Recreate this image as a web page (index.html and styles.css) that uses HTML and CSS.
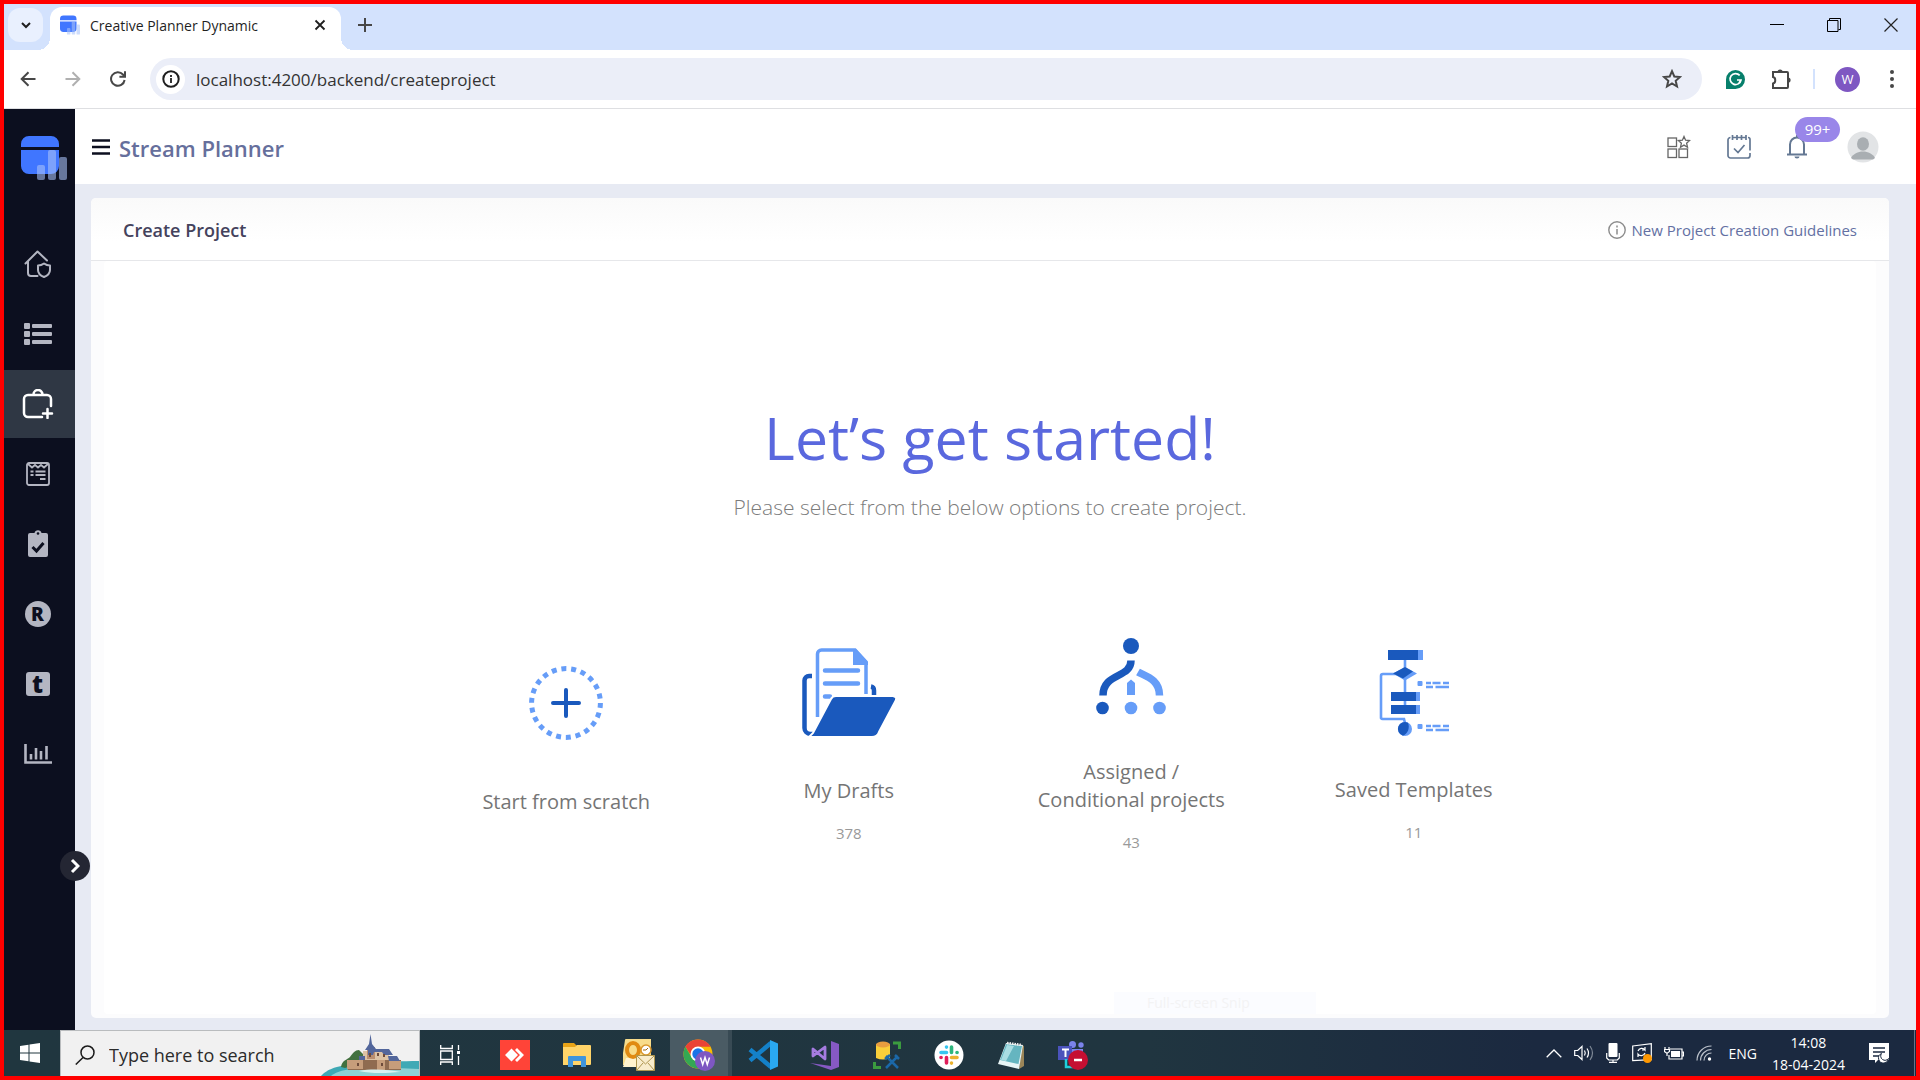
FILE: index.html
```html
<!DOCTYPE html>
<html lang="en">
<head>
<meta charset="utf-8">
<title>Creative Planner Dynamic</title>
<link rel="stylesheet" href="styles.css">
</head>
<body>
<svg class="defs" width="0" height="0" aria-hidden="true">
  <symbol id="logo" viewBox="0 0 46 44">
    <path fill="#4076ff" d="M0 11V8a8 8 0 0 1 8-8h22a8 8 0 0 1 8 8v3zM0 14h38v16a8 8 0 0 1-8 8H8a8 8 0 0 1-8-8z"/>
    <g fill="#a9c3f8" fill-opacity=".58"><rect x="16" y="29" width="8" height="15" rx="2"/><rect x="27" y="14" width="8" height="30" rx="2"/><rect x="38" y="21" width="8" height="23" rx="2"/></g>
  </symbol>
</svg>

<div class="tabstrip">
  <button class="tab-search" aria-label="Search tabs"><svg width="12" height="8" viewBox="0 0 12 8"><path d="M2 2l4 4 4-4" fill="none" stroke="#1f1f1f" stroke-width="2"/></svg></button>
  <div class="tab">
    <svg class="favicon" width="20" height="20"><use href="#logo"/></svg>
    <span class="tab-title">Creative Planner Dynamic</span>
    <button class="plain" aria-label="Close tab"><svg width="12" height="12" viewBox="0 0 12 12"><path d="M1.500 1.500l9 9M10.500 1.500l-9 9" stroke="#1f1f1f" stroke-width="1.800"/></svg></button>
  </div>
  <button class="plain new-tab" aria-label="New tab"><svg width="14" height="14" viewBox="0 0 14 14"><path d="M7 0v14M0 7h14" stroke="#474747" stroke-width="2"/></svg></button>
  <div class="window-controls">
    <button class="plain" aria-label="Minimize"><svg width="14" height="14" viewBox="0 0 14 14"><path d="M0 6.500h14" stroke="#000"/></svg></button>
    <button class="plain" aria-label="Restore"><svg width="14" height="14" viewBox="0 0 14 14"><path d="M.5 2.500h10.500v11H.5zM2.500 2V.5h11v11H11.500" fill="none" stroke="#000"/></svg></button>
    <button class="plain" aria-label="Close"><svg width="14" height="14" viewBox="0 0 14 14"><path d="M.5.5l13 13M13.500.5l-13 13" stroke="#222" stroke-width="1.200"/></svg></button>
  </div>
</div>

<div class="toolbar">
  <div class="nav-buttons">
    <button class="plain" aria-label="Back"><svg width="16" height="16" viewBox="0 0 16 16"><path d="M15.500 8H2M8.500 1.200L1.700 8l6.800 6.800" fill="none" stroke="#474747" stroke-width="2"/></svg></button>
    <button class="plain" aria-label="Forward"><svg width="16" height="16" viewBox="0 0 16 16"><path d="M.5 8H14M7.500 1.200L14.300 8l-6.800 6.800" fill="none" stroke="#b0b0b0" stroke-width="2"/></svg></button>
    <button class="plain" aria-label="Reload"><svg width="16" height="16" viewBox="0 0 16 16"><path d="M14.600 9A6.800 6.800 0 1 1 13 3.500L14.800 5.400M15 .3v5.500H9.400" fill="none" stroke="#474747" stroke-width="2"/></svg></button>
  </div>
  <div class="omnibox">
    <button class="plain site-info" aria-label="Site information"><svg width="18" height="18" viewBox="0 0 18 18"><circle cx="9" cy="9" r="7.700" fill="none" stroke="#1f1f1f" stroke-width="2"/><path d="M9 8v5M9 5v2" stroke="#1f1f1f" stroke-width="1.800"/></svg></button>
    <input class="url" type="text" aria-label="Address" value="localhost:4200/backend/createproject">
    <button class="plain" aria-label="Bookmark"><svg width="20" height="20" viewBox="0 0 20 20"><path d="M10 2.200l2.300 5.300 5.700.5-4.300 3.800 1.300 5.700-5-3-5 3 1.300-5.700L2 8l5.700-.5z" fill="none" stroke="#474747" stroke-width="2"/></svg></button>
  </div>
  <button class="plain" aria-label="Grammarly"><svg width="19" height="19" viewBox="0 0 19 19"><path fill="#077f6b" d="M9.500 0a9.500 9.500 0 1 1 0 19H0V9.500A9.500 9.500 0 0 1 9.500 0z"/><path d="M13.700 5.400A5.500 5.500 0 1 0 15 10h-4M15 10l-2 3" fill="none" stroke="#fff" stroke-width="1.700"/></svg></button>
  <button class="plain ext" aria-label="Extensions"><svg width="21" height="21" viewBox="0 0 21 21"><path d="M2 3h14a1 1 0 0 1 1 1v14a1 1 0 0 1-1 1H2v-4.500c3-.5 3-6 0-6.500z" fill="none" stroke="#474747" stroke-width="2"/><path fill="#474747" d="M6.500 3a2.600 2.600 0 0 1 5.200 0zM17 8.500a2.600 2.600 0 0 1 0 5.200z"/></svg></button>
  <span class="divider"></span>
  <button class="profile" aria-label="Profile">W</button>
  <button class="plain" aria-label="Menu"><svg width="6" height="20" viewBox="0 0 6 20"><g fill="#474747"><circle cx="3" cy="3" r="2"/><circle cx="3" cy="10" r="2"/><circle cx="3" cy="17" r="2"/></g></svg></button>
</div>

<div class="app">
  <aside class="sidebar">
    <svg class="brand" width="46" height="44"><use href="#logo"/></svg>
    <nav class="menu">
      <a href="#home" aria-label="Home"><svg width="28" height="28" viewBox="0 0 28 28"><g fill="none" stroke="#b4b6c2" stroke-width="2" stroke-linejoin="round" stroke-linecap="round"><path d="M1.500 13.500L13.500 1.500l9.500 9M4 11.500V23a3 3 0 0 0 3 3h6.500"/><path d="M20 13.500c2 1.500 4 2 6 2V20c0 3.500-3 5.800-6 7-3-1.200-6-3.500-6-7v-4.500c2 0 4-.5 6-2z"/></g></svg></a>
      <a href="#list" aria-label="List"><svg width="28" height="22" viewBox="0 0 28 22"><g fill="#b4b6c2"><rect y="0" width="6" height="6" rx="1"/><rect y="8" width="6" height="6" rx="1"/><rect y="16" width="6" height="6" rx="1"/><rect x="8" y="1" width="20" height="4" rx="1"/><rect x="8" y="9" width="20" height="4" rx="1"/><rect x="8" y="17" width="20" height="4" rx="1"/></g></svg></a>
      <a class="active" href="#create" aria-label="Create project"><svg width="32" height="30" viewBox="0 0 32 30"><g fill="none" stroke="#fff" stroke-width="2.500" stroke-linecap="round"><path d="M29 17v-7a4 4 0 0 0-4-4H6a4 4 0 0 0-4 4v14a4 4 0 0 0 4 4h14M11.500 5.500a4.500 4.500 0 0 1 9 0"/><path d="M25.500 20v9M21 24.500h9"/></g></svg></a>
      <a href="#requests" aria-label="Requests"><svg width="24" height="24" viewBox="0 0 24 24"><rect x="1" y="1" width="22" height="22" rx="2" fill="none" stroke="#b4b6c2" stroke-width="1.800"/><path d="M2 2l4 3.500L9 3l3 2.500L15 3l3 2.500L22 2M4.500 9.500h3M9.500 9.500h10M4.500 13h3M9.500 13h10M14 17h5.500" fill="none" stroke="#b4b6c2" stroke-width="1.800"/></svg></a>
      <a href="#tasks" aria-label="Tasks"><svg width="22" height="28" viewBox="0 0 22 28"><path fill="#b4b6c2" d="M3 3h4.500a3.600 3.600 0 0 1 7 0H19a2 2 0 0 1 2 2v20a2 2 0 0 1-2 2H3a2 2 0 0 1-2-2V5a2 2 0 0 1 2-2z"/><circle cx="11" cy="3.500" r="1.300" fill="#0c0f1f"/><path d="M5.500 17l4 4 7-8" fill="none" stroke="#0c0f1f" stroke-width="3"/></svg></a>
      <a href="#resources" aria-label="Resources"><span class="glyph round">R</span></a>
      <a href="#timesheet" aria-label="Timesheet"><span class="glyph square">t</span></a>
      <a href="#reports" aria-label="Reports"><svg width="28" height="20" viewBox="0 0 28 20"><path d="M1.500 0v18.500H28M7 10v5.500M12 4v11.500M17 7v8.500M22.500 2v13.500" fill="none" stroke="#b4b6c2" stroke-width="2.600"/></svg></a>
    </nav>
    <button class="expand" aria-label="Expand sidebar"><svg width="10" height="16" viewBox="0 0 10 16"><path d="M2 2l6 6-6 6" fill="none" stroke="#fff" stroke-width="3"/></svg></button>
  </aside>

  <div class="main">
    <header class="app-header">
      <button class="plain" aria-label="Toggle menu"><svg width="18" height="16" viewBox="0 0 18 16"><path d="M0 1.500h18M0 8h18M0 14.500h18" stroke="#0c0f1f" stroke-width="2.600"/></svg></button>
      <h1 class="app-name">Stream Planner</h1>
      <div class="actions">
        <button class="plain" aria-label="Apps"><svg width="24" height="24" viewBox="0 0 24 24"><g fill="none" stroke="#666" stroke-width="1.300"><rect x="1" y="3" width="8.500" height="8.500"/><rect x="1" y="14" width="8.500" height="8.500"/><rect x="12" y="14" width="8.500" height="8.500"/><path d="M17 1.500l1.600 3.700 4 .3-3 2.700.9 4-3.500-2.100-3.500 2.100.9-4-3-2.700 4-.3z"/></g></svg></button>
        <button class="plain" aria-label="Calendar"><svg width="24" height="24" viewBox="0 0 24 24"><path d="M5.500 2.500H19M21 2.500a2 2 0 0 1 2 2v11M23 18v2.500a2.500 2.500 0 0 1-2.500 2.500h-17A2.500 2.500 0 0 1 1 20.500V5a2.500 2.500 0 0 1 2.500-2.500M5.500 0v5M10 0v5M14.500 0v5M19 0v5M7 13.500l4 4L17.500 10" fill="none" stroke="#647893" stroke-width="1.700"/></svg></button>
        <button class="plain bell" aria-label="Notifications"><svg width="20" height="24" viewBox="0 0 20 24"><path d="M0 19.500h20M3 19.500V9.500a7 7 0 0 1 14 0v10M10 0v3" fill="none" stroke="#647893" stroke-width="2"/><path d="M7.500 21.500h5a2.500 2 0 0 1-5 0z" fill="#647893"/></svg><span class="badge">99+</span></button>
        <button class="plain" aria-label="Account"><svg width="32" height="32" viewBox="0 0 32 32"><circle cx="16" cy="16" r="15.500" fill="#e2e4e6"/><ellipse cx="16" cy="13" rx="6" ry="6.800" fill="#a9aeb2"/><path fill="#a9aeb2" d="M4 27c2-4 7-6.500 12-6.500S26 23 28 27l-2 1.500H6z"/></svg></button>
      </div>
    </header>

    <main class="page">
      <section class="card">
        <div class="card-head">
          <h2 class="card-title">Create Project</h2>
          <a class="guidelines" href="#guidelines"><svg width="18" height="18" viewBox="0 0 18 18"><circle cx="9" cy="9" r="8.200" fill="none" stroke="#8c8c8c" stroke-width="1.400"/><path d="M9 8v5.500M9 4.500v2" stroke="#8c8c8c" stroke-width="1.500"/></svg>New Project Creation Guidelines</a>
        </div>
        <div class="card-body">
          <h3 class="hero">Let’s get started!</h3>
          <p class="hint">Please select from the below options to create project.</p>
          <div class="options">
            <a class="option bare" href="#scratch">
              <svg width="74" height="82" viewBox="0 0 74 82"><circle cx="37" cy="37" r="34.400" fill="none" stroke="#669df8" stroke-width="5" stroke-dasharray="5 4.825"/><path d="M37 24v26M24 37h26" stroke="#1a59bd" stroke-width="4" stroke-linecap="round"/></svg>
              <span class="label">Start from scratch</span>
            </a>
            <a class="option" href="#drafts">
              <svg width="94" height="89" viewBox="0 0 94 89"><path d="M10 28H7a4.500 4.500 0 0 0-4.500 4.500V80a6 6 0 0 0 6 6H30M69 38.500q3 .5 3 4V52" fill="none" stroke="#1a59bd" stroke-width="4.500"/><path d="M15.500 69V6a4 4 0 0 1 4-4H53L64 14v32" fill="none" stroke="#669df8" stroke-width="3.500"/><path fill="#669df8" d="M51 1h3l12 13v3H51z"/><path d="M23 22.500h33M23 35.500h33M23 48.500h5" stroke="#669df8" stroke-width="4.500" stroke-linecap="round"/><path fill="#1a59bd" stroke="#fff" stroke-width="2" d="M29 51q1.500-3 5-3h57q4 1 3 4L77 84q-2 5-7 5H7l4-4z"/></svg>
              <span class="label">My Drafts</span>
              <span class="count">378</span>
            </a>
            <a class="option" href="#assigned">
              <svg width="70" height="80" viewBox="0 0 70 80"><g fill="#1a59bd"><circle cx="35" cy="8" r="8"/><circle cx="6.500" cy="70" r="6.300"/></g><g fill="#669df8"><circle cx="35" cy="70" r="6.300"/><circle cx="63.500" cy="70" r="6.300"/><path d="M31 57V45l4-3.500 4 3.500v12z"/></g><path d="M35 22.500c0 18-28 12-28 35" fill="none" stroke="#1a59bd" stroke-width="7.500"/><path d="M42 34c7 4 21.500 7 21.500 23.500" fill="none" stroke="#669df8" stroke-width="7.500"/></svg>
              <span class="label">Assigned / Conditional projects</span>
              <span class="count">43</span>
            </a>
            <a class="option" href="#templates">
              <svg width="70" height="87" viewBox="0 0 70 87"><path d="M26 10v11M26 27v31M20 25H4a2 2 0 0 0-2 2v42a2 2 0 0 0 2 1h21l1 4" fill="none" stroke="#669df8" stroke-width="2.600"/><g fill="#669df8"><rect x="9" y="1" width="35" height="10"/><path d="M26 18l12 6.500L26 31.500 14 24.500z"/><rect x="12" y="43" width="29" height="9"/><rect x="12" y="56" width="29" height="9"/><circle cx="26" cy="80" r="7"/><rect x="38.500" y="32" width="5" height="5" rx="1"/><rect x="38.500" y="75" width="5" height="5" rx="1"/></g><g fill="#1a59bd"><rect x="9" y="1" width="30" height="10"/><path d="M26 18l8 4.500L24 29.500 14 24.500z"/><rect x="12" y="43" width="25" height="9"/><rect x="12" y="56" width="25" height="9"/><path d="M29 73.700A7 7 0 1 0 24 86.700c5-2 7-8 5-13z"/></g><path d="M47 34h5M53.500 34h8M64 34h6M47 38h7M56.500 38H70M47 77h5M53.500 77h8M64 77h6M47 81h7M56.500 81H70" stroke="#669df8" stroke-width="2.500"/></svg>
              <span class="label">Saved Templates</span>
              <span class="count">11</span>
            </a>
          </div>
        </div>
        <span class="snip">Full-screen Snip</span>
      </section>
    </main>
  </div>
</div>

<footer class="taskbar">
  <button class="plain start" aria-label="Start"><svg width="20" height="20" viewBox="0 0 20 20"><path fill="#fff" d="M0 3l8.500-1.200v7.700H0zM9.500 1.600L20 0v9.500H9.500zM0 10.500h8.500v7.700L0 17zM9.500 10.500H20V20L9.500 18.400z"/></svg></button>
  <label class="search">
    <svg width="20" height="20" viewBox="0 0 20 20"><circle cx="12.500" cy="7.500" r="6.500" fill="none" stroke="#1a1a1a" stroke-width="1.500"/><path d="M8 12.500L.8 19.500" stroke="#1a1a1a" stroke-width="1.500"/></svg>
    <input type="text" placeholder="Type here to search" aria-label="Search">
    <svg class="castle" width="98" height="42" viewBox="0 0 98 42"><path fill="#3fa9b5" d="M0 42C10 31 28 28 98 27v15z"/><path fill="#8fd0d4" d="M10 42c10-8 30-9 88-7v7z"/><path fill="#42713f" d="M20 33c1-7 6-7 9-10 3-4 5-7 9-7l10 10-24 8z"/><path fill="#8f6b50" d="M26 26h54v10H27z"/><path fill="#c69d7b" d="M26 26h16v9H26zM56 26h8v11h-8zM68 27h12v8H68z"/><path fill="#dcc3a5" d="M42 17h26v9H42z"/><path fill="#b98e70" d="M46 13h8v12h-8z"/><path fill="#52669b" d="M44 16l4-6 1.500-10 1.500 10 4 5h13l4 6h-9l-2-3h-8l-1 3h-5v-5zM67 22h9l3 5H68zM38 22h6v4h-6z"/><path fill="#6d4b3b" d="M48 19h2v4h-2zM56 19h2v3h-2zM62 20h2v3h-2zM36 29h2v3h-2zM60 29h2v3h-2z"/><path fill="#d9f1f1" d="M38 37c14-3 30-1 42 1-15 1-28 2-42-1z"/></svg>
  </label>
  <div class="apps">
    <button aria-label="Task view"><svg width="20" height="20" viewBox="0 0 20 20"><path d="M.7 0v3.500h11.600V0M.7 6h11.600v8.500H.7zM.7 20v-3h11.600v3M18.500 0v5M18.500 11v9" fill="none" stroke="#fff" stroke-width="1.300"/><path fill="#fff" d="M17 6h3v3h-3z"/></svg></button>
    <button aria-label="AnyDesk"><svg width="30" height="30" viewBox="0 0 30 30"><path fill="#ff4438" d="M0 0h30v30H0z"/><path fill="#fff" d="M5 15l6.500-6.500L18 15l-6.500 6.500zM15 10l2-2 7 7-7 7-2-2 5-5z"/></svg></button>
    <button aria-label="File Explorer"><svg width="28" height="24" viewBox="0 0 28 24"><path fill="#e8a317" d="M0 1q0-1 1-1h10l3 3v4H0z"/><path fill="#ffd469" d="M0 4h12l2-2h13q1 0 1 1v18q0 1-1 1H0z"/><path fill="#3f95dc" d="M5 24V14q0-1 1-1h16q1 0 1 1v10h-5v-6h-8v6z"/></svg></button>
    <button aria-label="Outlook"><svg width="32" height="32" viewBox="0 0 32 32"><path fill="#f8dc8a" d="M2 1q0-1 1-1h25v26H0V14z"/><path fill="#fff3cf" d="M3 19h15v9H0z"/><ellipse cx="10" cy="11" rx="6" ry="7" fill="none" stroke="#e08a12" stroke-width="4"/><circle cx="23" cy="11" r="5" fill="#fff" stroke="#d9972c" stroke-width="1.500"/><path d="M20 11h3l2-2" fill="none" stroke="#a56a10"/><path fill="#f8eccb" stroke="#ae964f" d="M13.500 16.500h18v15h-18z"/><path d="M14 17l8.500 8 8.500-8M14 31l6-7M31 31l-6-7" fill="none" stroke="#ae964f"/></svg></button>
    <button class="active" aria-label="Chrome"><svg width="32" height="32" viewBox="0 0 32 32"><circle cx="15" cy="15" r="14.500" fill="#fbbc04"/><path fill="#ea4335" d="M2.400 7.800A14.500 14.500 0 0 1 27.600 7.800H15L9 18z"/><path fill="#34a853" d="M2.400 7.800A14.500 14.500 0 0 0 15 29.500L21 19H9z"/><circle cx="15" cy="15" r="7.500" fill="#fff"/><circle cx="15" cy="15" r="5.700" fill="#1a73e8"/><circle cx="22" cy="22" r="10" fill="#7e57c2"/><path d="M17.500 18.500l2.200 7 2.300-7 2.300 7 2.200-7" fill="none" stroke="#fff" stroke-width="1.500"/></svg></button>
    <button aria-label="Visual Studio Code"><svg width="30" height="30" viewBox="0 0 30 30"><path d="M2 9.500L23 27M2 20.500L23 3" stroke="#1481c9" stroke-width="4.500"/><path fill="#2aa9f2" d="M22 0l8 3.500v23L22 30z"/></svg></button>
    <button aria-label="Visual Studio"><svg width="30" height="30" viewBox="0 0 30 30"><path fill="#8659c4" d="M21 1l8 3v23l-8 3L0 23l21 3z"/><path d="M3 9v7l12-9v12L3 9z" fill="none" stroke="#a57be0" stroke-width="2.800" stroke-linejoin="round"/></svg></button>
    <button aria-label="Management Studio"><svg width="28" height="28" viewBox="0 0 28 28"><path fill="#f9cf3a" d="M3 3h14v14q-7 3-14 0z"/><ellipse cx="10" cy="3.500" rx="7" ry="3" fill="#e89d3f"/><path d="M20 2h6.500v6M1.500 21v5.500H8" fill="none" stroke="#3b9b3f" stroke-width="3"/><path d="M13 15l12 12M25 15L13 27M12 18l5-4M22 14l4 4" stroke="#1b68a8" stroke-width="2.500"/></svg></button>
    <button aria-label="Slack"><svg width="30" height="30" viewBox="0 0 30 30"><circle cx="15" cy="15" r="14.500" fill="#fff"/><g stroke-width="3.600" stroke-linecap="round"><path d="M7 12.500h5.500M12.500 7v.1" stroke="#36c5f0"/><path d="M17.500 7v5.500M23 12.500h.1" stroke="#2eb67d"/><path d="M17.500 17.500H23M17.500 23v.1" stroke="#ecb22e"/><path d="M12.500 17.500V23M7 17.500h.1" stroke="#e01e5a"/></g></svg></button>
    <button aria-label="Notepad"><svg width="28" height="28" viewBox="0 0 28 28"><path fill="#9a8558" d="M25 4l2 1v20l-5 3z"/><path fill="#e8f5f6" d="M9 2l17 2-4 24L1 23z"/><path fill="#65b5c0" d="M9 3l16 2-3.500 18L3 19z"/><path fill="#a9dde2" d="M10 4l7 1-8 15-5-1z"/><path d="M10 2l15 2" stroke="#eee" stroke-width="2.500" stroke-dasharray="1.500 1"/></svg></button>
    <button aria-label="Teams"><svg width="30" height="30" viewBox="0 0 30 30"><g fill="#7b83eb"><circle cx="14.500" cy="4.500" r="3.500"/><circle cx="23" cy="5" r="2.700"/><path d="M12 9h13v8H12z"/></g><path fill="#4b53bc" d="M0 6h14v14H0z"/><path d="M4 9.500h7M7.500 9.500V17" stroke="#fff" stroke-width="2"/><path d="M8 19v8h7" fill="none" stroke="#20d0dc" stroke-width="2.500"/><circle cx="20" cy="20" r="10" fill="#c50f32"/><path d="M16 20h8" stroke="#fff" stroke-width="2.500"/></svg></button>
  </div>
  <div class="tray">
    <button class="plain" aria-label="Show hidden icons"><svg width="16" height="9" viewBox="0 0 16 9"><path d="M.7 8.300L8 1l7.300 7.300" fill="none" stroke="#fff" stroke-width="1.300"/></svg></button>
    <button class="plain" aria-label="Volume"><svg width="20" height="18" viewBox="0 0 20 18"><path d="M.7 6.500h3L8 2.500v13l-4.300-4h-3zM10.500 6.500q1.500 2.500 0 5M13 4.500q3 4.500 0 9" fill="none" stroke="#fff" stroke-width="1.200"/><path d="M16 2q5 7 0 14" fill="none" stroke="#7e8896" stroke-width="1.200"/></svg></button>
    <button class="plain" aria-label="Microphone"><svg width="14" height="20" viewBox="0 0 14 20"><rect x="2.500" width="9" height="14" rx="1" fill="#fff"/><path d="M.7 10v5l2 2h8.600l2-2v-5M7 17v3M3 19.400h8" fill="none" stroke="#fff" stroke-width="1.200"/></svg></button>
    <button class="plain" aria-label="Updates"><svg width="20" height="20" viewBox="0 0 20 20"><path d="M.7 3L19.300.7v16L.7 17.500zM6 8a4 4 0 0 1 7-1V4M13 7h-3M13 10a4 4 0 0 1-7 1v3" fill="none" stroke="#fff" stroke-width="1.200"/><circle cx="15.500" cy="15.500" r="4.500" fill="#ff9800"/></svg></button>
    <button class="plain" aria-label="Battery"><svg width="20" height="14" viewBox="0 0 20 14"><path d="M6 3h12v10H5V9M18 6h1.500v4H18M1 1v2M5 1v2M.5 3.500h5v2l-2 1.500H2.500l-2-1.500zM3 7v3" fill="none" stroke="#fff" stroke-width="1.200"/><path fill="#fff" d="M7 5h9v6H7z"/></svg></button>
    <button class="plain" aria-label="Network"><svg width="16" height="16" viewBox="0 0 16 16"><path d="M1 15.500A14.500 14.500 0 0 1 15.500 1M4.500 15.500a11 11 0 0 1 11-11M8 15.500A7.500 7.500 0 0 1 15.500 8" fill="none" stroke="#bdc3cc" stroke-width="1.200"/><circle cx="13.500" cy="14" r="1.700" fill="#fff"/></svg></button>
    <span class="lang">ENG</span>
    <div class="clock"><time>14:08</time><time>18-04-2024</time></div>
    <button class="plain" aria-label="Notification center"><svg width="20" height="20" viewBox="0 0 20 20"><path fill="#fff" d="M0 0h20v17H9l-3 3v-3H0z"/><path d="M4 5h12M4 9h12M4 13h7" stroke="#1b2940" stroke-width="1.400"/><path d="M19.500 15.500a5 5 0 1 1-7-5 4 4 0 0 0 7 5z" fill="#fff" stroke="#1b2940"/></svg></button>
    <span class="show-desktop"></span>
  </div>
</footer>
</body>
</html>
```

FILE: styles.css
```css
* { box-sizing: border-box; }

body {
  margin: 0;
  min-height: 100vh;
  display: flex;
  flex-direction: column;
  border: 4px solid #f00;
  background: #fff;
  color: #1f1f1f;
  font-family: "Open Sans", "Noto Sans", sans-serif;
  font-size: 14px;
}

h1, h2, h3, p { margin: 0; }
a { color: inherit; text-decoration: none; }
button, input { font: inherit; border: 0; }
button { padding: 0; cursor: pointer; }
svg { display: block; flex: none; }
.defs { position: absolute; }

.plain {
  display: flex;
  align-items: center;
  justify-content: center;
  background: none;
}

/* Browser tab strip */
.tabstrip {
  display: flex;
  align-items: center;
  height: 46px;
  padding-left: 4px;
  background: #d3e2fd;
}
.tab-search {
  display: flex;
  align-items: center;
  justify-content: center;
  width: 35px;
  height: 34px;
  margin-bottom: 4px;
  border-radius: 12px;
  background: #e9f0fe;
}
.tab {
  position: relative;
  display: flex;
  align-items: center;
  align-self: flex-end;
  width: 291px;
  height: 43px;
  margin-left: 7px;
  padding: 0 15px 7px 10px;
  border-radius: 12px 12px 0 0;
  background: #fff;
}
.tab::before,
.tab::after {
  content: "";
  position: absolute;
  bottom: 0;
  width: 12px;
  height: 12px;
}
.tab::before { left: -12px; background: radial-gradient(circle at 0 0, transparent 12px, #fff 12px); }
.tab::after { right: -12px; background: radial-gradient(circle at 100% 0, transparent 12px, #fff 12px); }
.tab-title { flex: 1; padding-left: 10px; white-space: nowrap; }
.new-tab { margin: 0 0 4px 17px; }
.window-controls {
  display: flex;
  gap: 43px;
  margin: 0 18px 4px auto;
}

/* Browser toolbar */
.toolbar {
  display: flex;
  align-items: center;
  height: 59px;
  padding: 0 21px 0 16px;
  border-bottom: 1px solid #dedfe2;
}
.nav-buttons { display: flex; gap: 29px; }
.omnibox {
  flex: 1;
  display: flex;
  align-items: center;
  height: 42px;
  margin: 0 24px;
  padding: 0 20px 0 6px;
  border-radius: 21px;
  background: #ebeef8;
}
.site-info { width: 29px; height: 29px; border-radius: 50%; background: #fff; }
.url {
  flex: 1;
  min-width: 0;
  padding: 0 11px;
  background: none;
  color: #333;
  font-size: 17px;
}
.ext { margin-left: 26px; }
.divider { width: 2px; height: 20px; margin: 0 20px 0 21px; background: #d3e2fd; }
.profile {
  width: 25px;
  height: 25px;
  margin-right: 29px;
  border-radius: 50%;
  background: #7e57c2;
  color: #fff;
  font-size: 13px;
}

/* Application shell */
.app { flex: 1; display: flex; }
.sidebar {
  position: relative;
  z-index: 1;
  flex: none;
  width: 71px;
  background: #0c0f1f;
}
.brand { margin: 27px 0 50px 17px; }
.menu { display: flex; flex-direction: column; gap: 2px; }
.menu a {
  display: flex;
  align-items: center;
  justify-content: center;
  height: 68px;
  padding-right: 4px;
}
.menu .active { background: #2f3744; }
.glyph {
  display: flex;
  align-items: center;
  justify-content: center;
  width: 26px;
  height: 26px;
  background: #b4b6c2;
  color: #0c0f1f;
  font-size: 19px;
  font-weight: 800;
  line-height: 26px;
}
.round { border-radius: 50%; }
.square { width: 24px; height: 24px; border-radius: 3px; font-size: 24px; line-height: 20px; }
.expand {
  position: absolute;
  right: -15px;
  bottom: 149px;
  display: flex;
  align-items: center;
  justify-content: center;
  width: 30px;
  height: 30px;
  border-radius: 50%;
  background: #242633;
}

.main {
  flex: 1;
  min-width: 0;
  display: flex;
  flex-direction: column;
  background: #e7eaf3;
}
.app-header {
  display: flex;
  align-items: center;
  height: 75px;
  padding: 0 37px 0 17px;
  background: #fff;
}
.app-name {
  padding: 3px 0 0 9px;
  color: #666f9c;
  font-size: 22px;
  font-weight: 600;
  line-height: 28px;
}
.actions { display: flex; align-items: center; gap: 36px; margin-left: auto; }
.bell { position: relative; margin-right: 4px; }
.badge {
  position: absolute;
  left: 8px;
  top: -18px;
  width: 45px;
  height: 25px;
  border-radius: 13px;
  background: #9986e9;
  color: #fff;
  font-size: 15px;
  line-height: 25px;
}

.page { flex: 1; display: flex; padding: 14px 27px 12px 16px; }
.card {
  position: relative;
  flex: 1;
  display: flex;
  flex-direction: column;
  padding-bottom: 4px;
  border-radius: 5px;
  background: #fcfcfd;
}
.card-head {
  display: flex;
  align-items: center;
  justify-content: space-between;
  height: 63px;
  padding: 2px 32px 0;
  border-bottom: 1px solid #e6e7ea;
  border-radius: 5px 5px 0 0;
  background: linear-gradient(#fafafa, #fff 70%);
}
.card-title { color: #44425c; font-size: 18px; font-weight: 600; line-height: 24px; }
.guidelines {
  display: flex;
  align-items: center;
  gap: 6px;
  color: #6370a3;
  font-size: 15px;
  line-height: 20px;
}
.card-body {
  flex: 1;
  display: flex;
  flex-direction: column;
  align-items: center;
  margin: 0 13px;
  padding-top: 136px;
  border-radius: 4px;
  background: #fff;
}
.hero { color: #5a68de; font-size: 59px; font-weight: 400; line-height: 80px; }
.hint { margin-top: 14px; color: #7c7c7c; font-size: 21px; font-weight: 300; line-height: 32px; }
.options {
  display: grid;
  grid-template-columns: repeat(4, 1fr);
  align-items: center;
  width: 1130px;
  max-width: 100%;
  margin-top: 115px;
}
.option {
  display: flex;
  flex-direction: column;
  align-items: center;
  text-align: center;
  color: #757575;
}
.bare { padding-bottom: 8px; }
.label { max-width: 200px; margin-top: 40px; font-size: 20px; line-height: 28px; }
.count { margin-top: 18px; color: #999; font-size: 15px; line-height: 20px; }
.snip {
  position: absolute;
  left: 1023px;
  bottom: 4px;
  width: 202px;
  padding-left: 33px;
  background: #fbfcff;
  color: #f3f3f4;
  font-size: 14px;
  line-height: 22px;
}

/* Desktop taskbar */
.taskbar {
  display: flex;
  height: 46px;
  background: linear-gradient(90deg, #20363f, #203540 60%, #1b2940 80%);
  color: #fff;
}
.start { width: 56px; padding-right: 4px; }
.search {
  position: relative;
  display: flex;
  align-items: center;
  width: 360px;
  padding: 2px 0 0 14px;
  border: 1px solid #b9bcbe;
  border-bottom: 0;
  background: #f1f1f1;
}
.search input { flex: 1; min-width: 0; padding: 0 14px; background: none; font-size: 18px; }
.search input::placeholder { color: #2b2b2b; opacity: 1; }
.castle { position: absolute; right: 0; bottom: 0; }
.apps { display: flex; }
.apps button {
  display: flex;
  align-items: center;
  justify-content: center;
  width: 62px;
  padding: 4px 0 0;
  background: none;
}
.apps button:first-child { width: 64px; padding-right: 4px; }
.apps .active { background: #4a5b64; border-right: 4px solid #384a54; }
.tray { display: flex; align-items: center; gap: 12px; margin-left: auto; }
.lang { margin-left: 4px; font-size: 14px; }
.clock {
  display: flex;
  flex-direction: column;
  align-items: center;
  margin: 2px 12px 0 3px;
  font-size: 14px;
  line-height: 22px;
}
.show-desktop { align-self: stretch; width: 1px; margin: 0 1px 0 13px; background: #6b7486; }
```
